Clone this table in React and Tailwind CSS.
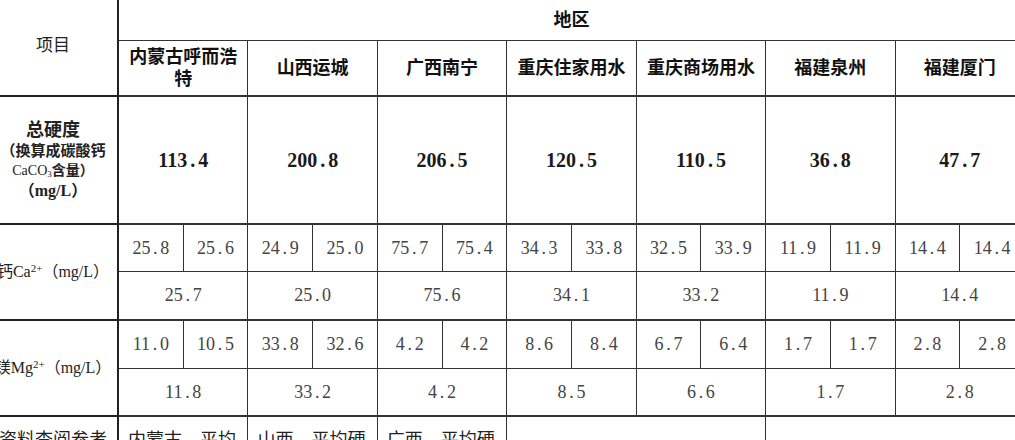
import React from "react";

const regions = ["内蒙古呼而浩特", "山西运城", "广西南宁", "重庆住家用水", "重庆商场用水", "福建泉州", "福建厦门"];
const hardness = ["113.4", "200.8", "206.5", "120.5", "110.5", "36.8", "47.7"];
const ca = [["25.8", "25.6"], ["24.9", "25.0"], ["75.7", "75.4"], ["34.3", "33.8"], ["32.5", "33.9"], ["11.9", "11.9"], ["14.4", "14.4"]];
const caAvg = ["25.7", "25.0", "75.6", "34.1", "33.2", "11.9", "14.4"];
const mg = [["11.0", "10.5"], ["33.8", "32.6"], ["4.2", "4.2"], ["8.6", "8.4"], ["6.7", "6.4"], ["1.7", "1.7"], ["2.8", "2.8"]];
const mgAvg = ["11.8", "33.2", "4.2", "8.5", "6.6", "1.7", "2.8"];

// SimSun-like half-width period: dot followed by a gap
const Num = ({ v }) => {
  const [a, b] = v.split(".");
  return (
    <span className="whitespace-nowrap">
      {a}
      <span className="inline-block w-[0.55em]">.</span>
      {b}
    </span>
  );
};

const cell = "flex items-center justify-center text-center border-r border-b border-[#333]";
const label = "flex items-center justify-center text-center border-r-2 border-b-2 border-[#222] text-[#222]";

const App = () => {
  return (
    <div
      className="w-[1015px] h-[440px] overflow-hidden bg-white"
      style={{ fontFamily: '"Liberation Serif", "Noto Sans CJK SC", serif' }}
    >
      <div className="-ml-[11px] w-[1036px] grid grid-cols-[130px_repeat(14,minmax(0,1fr))] grid-rows-[41px_56px_128px_47px_49px_48px_48px_60px]">
        {/* header */}
        <div className={`${label} row-span-2 text-[17px] pb-[4px]`}>项目</div>
        <div className={`${cell} col-span-14 text-[18px] font-bold text-[#111]`}>地区</div>
        {regions.map((r) => (
          <div key={r} className={`${cell} border-b-2 col-span-2 px-[6px] text-[18px] font-bold leading-[22px] text-[#111]`}>
            {r}
          </div>
        ))}

        {/* total hardness */}
        <div className={`${label} flex-col font-bold`}>
          <div className="text-[18px] leading-[22px]">总硬度</div>
          <div className="text-[15px] leading-[20px]">（换算成碳酸钙</div>
          <div className="text-[14px] leading-[20px] font-normal">
            CaCO<sub className="text-[9px]">3</sub>
            <span className="font-bold">含量）</span>
          </div>
          <div className="text-[16px] leading-[20px]">（mg/L）</div>
        </div>
        {hardness.map((h, i) => (
          <div key={i} className={`${cell} border-b-2 col-span-2 text-[20px] font-bold text-[#1a1a1a]`}>
            <Num v={h} />
          </div>
        ))}

        {/* calcium */}
        <div className={`${label} row-span-2 text-[16px] whitespace-nowrap`}>
          <span>
            钙Ca<sup className="text-[11px]">2+</sup>（mg/L）
          </span>
        </div>
        {ca.flat().map((v, i) => (
          <div key={i} className={`${cell} text-[18px] text-[#444]`}>
            <Num v={v} />
          </div>
        ))}
        {caAvg.map((v, i) => (
          <div key={i} className={`${cell} border-b-2 col-span-2 text-[18px] text-[#444]`}>
            <Num v={v} />
          </div>
        ))}

        {/* magnesium */}
        <div className={`${label} row-span-2 text-[16px] whitespace-nowrap`}>
          <span>
            镁Mg<sup className="text-[11px]">2+</sup>（mg/L）
          </span>
        </div>
        {mg.flat().map((v, i) => (
          <div key={i} className={`${cell} text-[18px] text-[#444]`}>
            <Num v={v} />
          </div>
        ))}
        {mgAvg.map((v, i) => (
          <div key={i} className={`${cell} border-b-2 col-span-2 text-[18px] text-[#444]`}>
            <Num v={v} />
          </div>
        ))}

        {/* references */}
        <div className="border-r-2 border-[#222] pt-[12px] text-center text-[18px] text-[#222] leading-[22px]">资料查阅参考</div>
        {["内蒙古—平均硬度", "山西—平均硬度", "广西—平均硬度"].map((t) => (
          <div key={t} className="col-span-2 border-r border-[#333] pt-[12px] px-[9px] text-[18px] text-[#222] leading-[22px]">
            {t}
          </div>
        ))}
        <div className="col-span-4 border-r border-[#333]"></div>
        <div className="col-span-4"></div>
      </div>
    </div>
  );
};

export default App;
